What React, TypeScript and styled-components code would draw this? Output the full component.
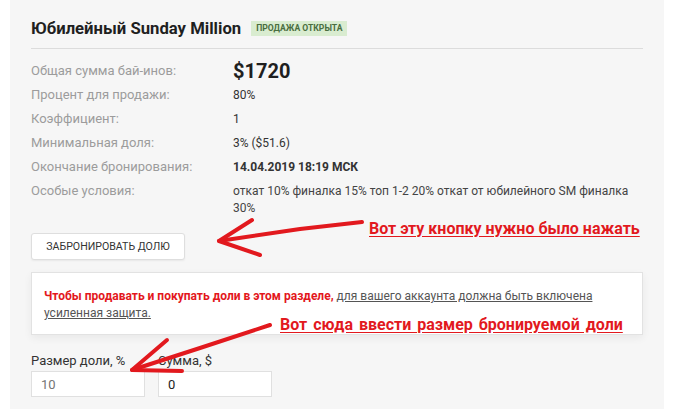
import styled, { createGlobalStyle } from "styled-components"

const GlobalStyle = createGlobalStyle`
  html, body {
    margin: 0;
    padding: 0;
    background: #ffffff;
    font-family: Roboto, "Noto Sans", sans-serif;
  }
`

const Page = styled.div`
  position: relative;
  width: 700px;
  height: 409px;
  overflow: hidden;
`

const Panel = styled.div`
  margin-left: 10px;
  width: 654px;
  height: 409px;
  box-sizing: border-box;
  padding: 16px 21px 0 21px;
  background: #f6f6f6;
`

const Header = styled.div`
  display: flex;
  align-items: center;
  gap: 10px;
  height: 24px;
  padding-bottom: 8px;
  border-bottom: 1px solid #dcdcdc;
`

const Title = styled.h2`
  margin: 0;
  font-size: 16.7px;
  font-weight: 700;
  color: #1f1f1f;
`

const Badge = styled.span`
  background: #d9ecd0;
  color: #4a6e3f;
  font-size: 8.6px;
  font-weight: 700;
  padding: 3px 5px;
  line-height: 9px;
`

const Info = styled.div`
  display: grid;
  grid-template-columns: 202px 1fr;
  margin-top: 10px;
`

const Label = styled.div`
  font-size: 13px;
  color: #9c9c9c;
  line-height: 24px;
`

const Value = styled.div<{ $big?: boolean; $bold?: boolean }>`
  font-size: ${(p) => (p.$big ? "20px" : "12px")};
  font-weight: ${(p) => (p.$bold || p.$big ? 700 : 400)};
  color: ${(p) => (p.$big ? "#1f1f1f" : "#333")};
  line-height: 24px;
`

const Conditions = styled.div`
  font-size: 12px;
  color: #444;
  line-height: 17px;
  padding-top: 4px;
`

const Button = styled.button`
  margin-top: 16px;
  width: 154px;
  height: 27px;
  background: #ffffff;
  border: 1px solid #dedede;
  border-radius: 3px;
  font-family: Roboto, sans-serif;
  font-size: 10.6px;
  color: #333;
  box-shadow: 0 1px 2px rgba(0, 0, 0, 0.06);
`

const Notice = styled.div`
  margin-top: 12px;
  height: 63px;
  box-sizing: border-box;
  padding: 15px 12px 0 12px;
  background: #ffffff;
  border: 1px solid #e2e2e2;
  box-shadow: 0 3px 8px rgba(0, 0, 0, 0.06);
  font-size: 12px;
  line-height: 17px;
`

const Warn = styled.span`
  color: #e3171c;
  font-weight: 700;
`

const NoticeLink = styled.a`
  color: #555;
  text-decoration: underline;
`

const Fields = styled.div`
  display: flex;
  gap: 13px;
  margin-top: 18px;
`

const Field = styled.div`
  display: flex;
  flex-direction: column;
  gap: 2px;
`

const FieldLabel = styled.label`
  font-size: 13px;
  color: #333;
  line-height: 16px;
`

const Input = styled.input<{ $muted?: boolean }>`
  width: 114px;
  height: 26px;
  box-sizing: border-box;
  border: 1px solid #e0e0e0;
  background: #ffffff;
  padding: 0 9px;
  font-family: Roboto, sans-serif;
  font-size: 13px;
  color: ${(p) => (p.$muted ? "#aaa" : "#222")};
  outline: none;
`

const Note = styled.div<{ $x: number; $y: number; $spread?: number }>`
  position: absolute;
  left: ${(p) => p.$x}px;
  top: ${(p) => p.$y}px;
  color: #e2191e;
  font-size: 16px;
  font-weight: 700;
  word-spacing: ${(p) => p.$spread ?? 0}px;
  text-decoration: underline;
  text-underline-offset: 2px;
  white-space: nowrap;
`

const Arrows = styled.svg`
  position: absolute;
  left: 0;
  top: 0;
  pointer-events: none;
`

export default function App() {
  return (
    <Page>
      <GlobalStyle />
      <Panel>
        <Header>
          <Title>Юбилейный Sunday Million</Title>
          <Badge>ПРОДАЖА ОТКРЫТА</Badge>
        </Header>
        <Info>
          <Label>Общая сумма бай-инов:</Label>
          <Value $big>$1720</Value>
          <Label>Процент для продажи:</Label>
          <Value>80%</Value>
          <Label>Коэффициент:</Label>
          <Value>1</Value>
          <Label>Минимальная доля:</Label>
          <Value>3% ($51.6)</Value>
          <Label>Окончание бронирования:</Label>
          <Value $bold>14.04.2019 18:19 МСК</Value>
          <Label>Особые условия:</Label>
          <Conditions>откат 10% финалка 15% топ 1-2 20% откат от юбилейного SM финалка 30%</Conditions>
        </Info>
        <Button>ЗАБРОНИРОВАТЬ ДОЛЮ</Button>
        <Notice>
          <Warn>Чтобы продавать и покупать доли в этом разделе,</Warn>{" "}
          <NoticeLink>для вашего аккаунта должна быть включена усиленная защита.</NoticeLink>
        </Notice>
        <Fields>
          <Field>
            <FieldLabel>Размер доли, %</FieldLabel>
            <Input $muted placeholder="10" />
          </Field>
          <Field>
            <FieldLabel>Сумма, $</FieldLabel>
            <Input defaultValue="0" />
          </Field>
        </Fields>
      </Panel>
      <Note $x={369} $y={219}>Вот эту кнопку нужно было нажать</Note>
      <Note $x={280} $y={315} $spread={2}>Вот сюда ввести размер бронируемой доли</Note>
      <Arrows width="700" height="409" viewBox="0 0 700 409">
        <g fill="none" stroke="#e2191e" strokeWidth="4" strokeLinecap="round" strokeLinejoin="round">
          <path d="M362 222 L300 229 L219 241" />
          <path d="M252 220 L219 241 L260 255" />
          <path d="M270 325 L200 348 L132 370" />
          <path d="M167 340 L132 370 L182 371" />
        </g>
      </Arrows>
    </Page>
  )
}
